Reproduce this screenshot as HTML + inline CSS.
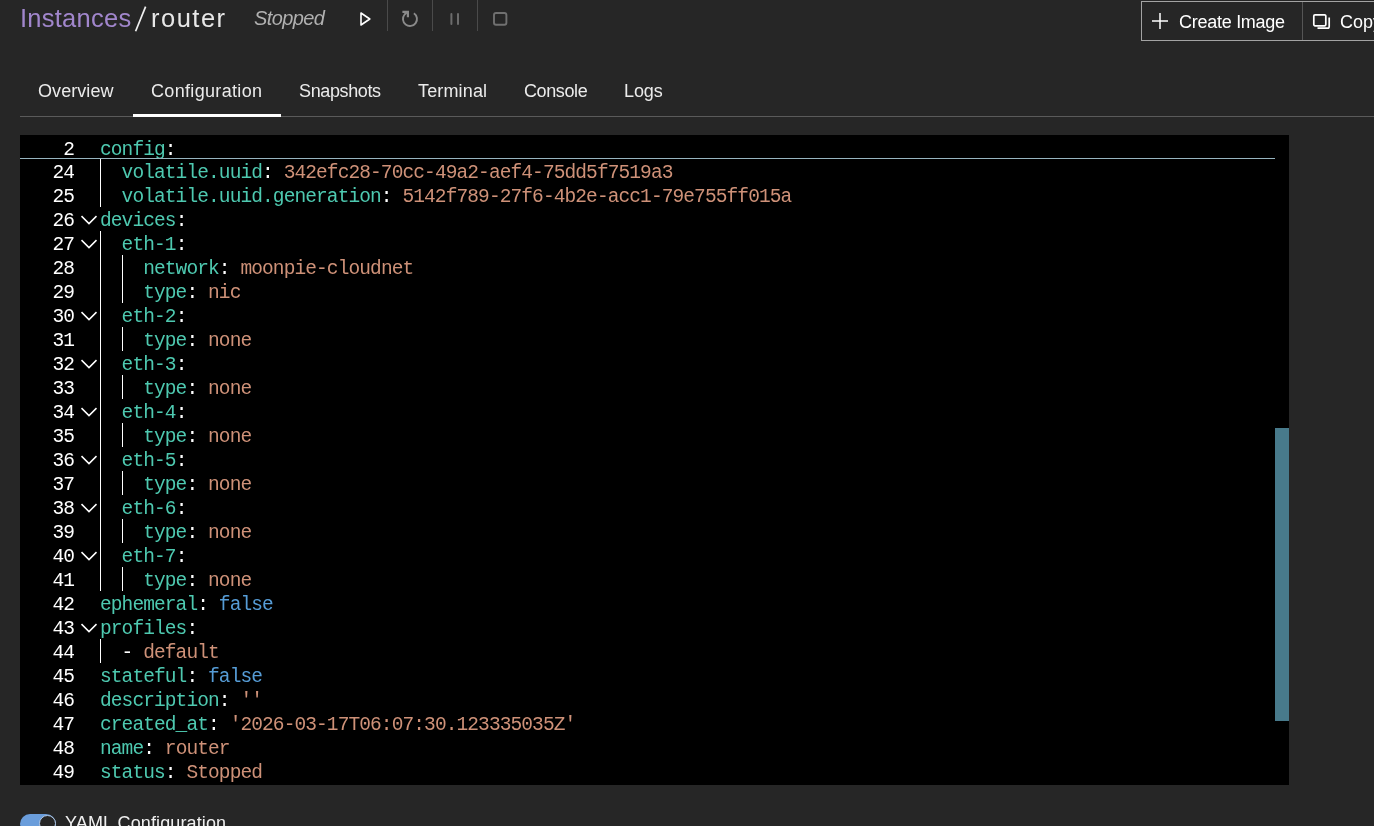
<!DOCTYPE html>
<html><head><meta charset="utf-8">
<style>
html,body{margin:0;padding:0}
#root{position:absolute;left:0;top:0;width:1374px;height:826px;will-change:transform}
body{width:1374px;height:826px;overflow:hidden;background:#262626;position:relative;font-family:"Liberation Sans",sans-serif;color:#fff}
.a{position:absolute;white-space:nowrap}
.t1{font-size:25.5px;line-height:30px}
.tab{font-size:18px;line-height:22px;color:#ebebeb}
#editor{position:absolute;left:20px;top:135px;width:1269px;height:650px;background:#000;overflow:hidden;font-family:"Liberation Mono",monospace;font-size:19.5px;letter-spacing:-0.9px}
.ln{position:absolute;left:0;width:54px;text-align:right;line-height:24px;height:24px;color:#fff;padding-top:1.5px}
.cd{position:absolute;left:80px;line-height:24px;height:24px;white-space:pre;color:#fff;padding-top:1.5px}
.fd{position:absolute;left:56px}
.gd{position:absolute;width:1px;background:#fff}
.k{color:#4ec9b0}.p{color:#fff}.s{color:#ce9178}.b{color:#569cd6}
</style></head><body>
<div id="root">
<!-- title -->
<div class="a t1" style="left:20px;top:3px;color:#a186cc;letter-spacing:0.25px">Instances</div>
<svg class="a" style="left:130px;top:0" width="20" height="40"><path d="M15.6 6.6 L5.6 31.2" stroke="#f0f0f0" stroke-width="1.7"/></svg>
<div class="a t1" style="left:151px;top:3px;color:#e8e8e8;letter-spacing:1.5px">router</div>
<div class="a" style="left:254px;top:5px;font-size:20px;line-height:26px;font-style:italic;color:#b0b0b0;letter-spacing:-0.6px">Stopped</div>
<!-- action buttons -->
<svg class="a" style="left:0;top:0" width="520" height="40">
 <path d="M361 13 L369.8 19 L361 25 Z" fill="none" stroke="#fff" stroke-width="1.6" stroke-linejoin="round"/>
 <rect x="387" y="0" width="1" height="31" fill="#4a4a4a"/>
 <rect x="432" y="0" width="1" height="31" fill="#4a4a4a"/>
 <rect x="477" y="0" width="1" height="31" fill="#4a4a4a"/>
 <path d="M413.9 13.2 A7 7 0 1 1 404.6 14.5 L407.4 12" fill="none" stroke="#8a8a8a" stroke-width="1.9"/>
 <path d="M402.4 11.9 L407.9 11.9 L407.9 17.2" fill="none" stroke="#8a8a8a" stroke-width="2.2" stroke-linejoin="miter"/>
 <path d="M451.4 14 V24 M458 14 V24" stroke="#6c6c6c" stroke-width="2" stroke-linecap="round"/>
 <rect x="494" y="13" width="12.4" height="11.8" rx="2" fill="none" stroke="#707070" stroke-width="1.9"/>
</svg>
<!-- create image / copy -->
<div class="a" style="left:1141px;top:1px;width:260px;height:38px;border:1px solid #a3a3a3"></div>
<div class="a" style="left:1302px;top:2px;width:1px;height:38px;background:#555"></div>
<svg class="a" style="left:1150px;top:11px" width="20" height="20"><path d="M10 2 V18 M2 10 H18" stroke="#fff" stroke-width="1.5"/></svg>
<svg class="a" style="left:1310px;top:10px" width="24" height="22"><path d="M5 4.8 H14.6 A1.2 1.2 0 0 1 15.8 6 V14.6 A1.2 1.2 0 0 1 14.6 15.8 H5 A1.2 1.2 0 0 1 3.8 14.6 V6 A1.2 1.2 0 0 1 5 4.8 Z" fill="none" stroke="#fff" stroke-width="1.7"/><path d="M19.2 7.5 V16.5 A1.7 1.7 0 0 1 17.5 18.2 H7.5" fill="none" stroke="#fff" stroke-width="1.7"/></svg>
<div class="a tab" style="left:1179px;top:11px;color:#fff;letter-spacing:-0.27px">Create Image</div>
<div class="a tab" style="left:1340px;top:11px;color:#fff">Copy</div>
<!-- tabs -->
<div class="a tab" style="left:38px;top:80px;letter-spacing:0.07px">Overview</div>
<div class="a tab" style="left:151px;top:80px;letter-spacing:0.33px">Configuration</div>
<div class="a tab" style="left:299px;top:80px;letter-spacing:-0.37px">Snapshots</div>
<div class="a tab" style="left:418px;top:80px;letter-spacing:0.15px">Terminal</div>
<div class="a tab" style="left:524px;top:80px;letter-spacing:-0.4px">Console</div>
<div class="a tab" style="left:624px;top:80px;letter-spacing:-0.13px">Logs</div>
<div class="a" style="left:20px;top:116px;width:1354px;height:1px;background:#5a5a5a"></div>
<div class="a" style="left:133px;top:114px;width:148px;height:3px;background:#fff"></div>
<!-- editor -->
<div id="editor">
<div class="ln" style="top:1px">2</div>
<div class="cd" style="top:1px"><span class="k">config</span><span class="p">:</span></div>
<div class="a" style="left:0;top:23px;width:1255px;height:1px;background:#97b4bf"></div>
<div class="gd" style="left:80px;top:24px;height:48px"></div>
<div class="gd" style="left:80px;top:96px;height:360px"></div>
<div class="gd" style="left:80px;top:504px;height:24px"></div>
<div class="gd" style="left:102px;top:120px;height:48px"></div>
<div class="gd" style="left:102px;top:192px;height:24px"></div>
<div class="gd" style="left:102px;top:240px;height:24px"></div>
<div class="gd" style="left:102px;top:288px;height:24px"></div>
<div class="gd" style="left:102px;top:336px;height:24px"></div>
<div class="gd" style="left:102px;top:384px;height:24px"></div>
<div class="gd" style="left:102px;top:432px;height:24px"></div>
<div class="ln" style="top:24px">24</div>
<div class="cd" style="top:24px">  <span class="k">volatile.uuid</span><span class="p">: </span><span class="s">342efc28-70cc-49a2-aef4-75dd5f7519a3</span></div>
<div class="ln" style="top:48px">25</div>
<div class="cd" style="top:48px">  <span class="k">volatile.uuid.generation</span><span class="p">: </span><span class="s">5142f789-27f6-4b2e-acc1-79e755ff015a</span></div>
<div class="ln" style="top:72px">26</div>
<svg class="fd" style="top:72px" width="28" height="24"><path d="M5.5 9.1 L13 16.6 L20.5 9.1" fill="none" stroke="#fff" stroke-width="1.5"/></svg>
<div class="cd" style="top:72px"><span class="k">devices</span><span class="p">:</span></div>
<div class="ln" style="top:96px">27</div>
<svg class="fd" style="top:96px" width="28" height="24"><path d="M5.5 9.1 L13 16.6 L20.5 9.1" fill="none" stroke="#fff" stroke-width="1.5"/></svg>
<div class="cd" style="top:96px">  <span class="k">eth-1</span><span class="p">:</span></div>
<div class="ln" style="top:120px">28</div>
<div class="cd" style="top:120px">    <span class="k">network</span><span class="p">: </span><span class="s">moonpie-cloudnet</span></div>
<div class="ln" style="top:144px">29</div>
<div class="cd" style="top:144px">    <span class="k">type</span><span class="p">: </span><span class="s">nic</span></div>
<div class="ln" style="top:168px">30</div>
<svg class="fd" style="top:168px" width="28" height="24"><path d="M5.5 9.1 L13 16.6 L20.5 9.1" fill="none" stroke="#fff" stroke-width="1.5"/></svg>
<div class="cd" style="top:168px">  <span class="k">eth-2</span><span class="p">:</span></div>
<div class="ln" style="top:192px">31</div>
<div class="cd" style="top:192px">    <span class="k">type</span><span class="p">: </span><span class="s">none</span></div>
<div class="ln" style="top:216px">32</div>
<svg class="fd" style="top:216px" width="28" height="24"><path d="M5.5 9.1 L13 16.6 L20.5 9.1" fill="none" stroke="#fff" stroke-width="1.5"/></svg>
<div class="cd" style="top:216px">  <span class="k">eth-3</span><span class="p">:</span></div>
<div class="ln" style="top:240px">33</div>
<div class="cd" style="top:240px">    <span class="k">type</span><span class="p">: </span><span class="s">none</span></div>
<div class="ln" style="top:264px">34</div>
<svg class="fd" style="top:264px" width="28" height="24"><path d="M5.5 9.1 L13 16.6 L20.5 9.1" fill="none" stroke="#fff" stroke-width="1.5"/></svg>
<div class="cd" style="top:264px">  <span class="k">eth-4</span><span class="p">:</span></div>
<div class="ln" style="top:288px">35</div>
<div class="cd" style="top:288px">    <span class="k">type</span><span class="p">: </span><span class="s">none</span></div>
<div class="ln" style="top:312px">36</div>
<svg class="fd" style="top:312px" width="28" height="24"><path d="M5.5 9.1 L13 16.6 L20.5 9.1" fill="none" stroke="#fff" stroke-width="1.5"/></svg>
<div class="cd" style="top:312px">  <span class="k">eth-5</span><span class="p">:</span></div>
<div class="ln" style="top:336px">37</div>
<div class="cd" style="top:336px">    <span class="k">type</span><span class="p">: </span><span class="s">none</span></div>
<div class="ln" style="top:360px">38</div>
<svg class="fd" style="top:360px" width="28" height="24"><path d="M5.5 9.1 L13 16.6 L20.5 9.1" fill="none" stroke="#fff" stroke-width="1.5"/></svg>
<div class="cd" style="top:360px">  <span class="k">eth-6</span><span class="p">:</span></div>
<div class="ln" style="top:384px">39</div>
<div class="cd" style="top:384px">    <span class="k">type</span><span class="p">: </span><span class="s">none</span></div>
<div class="ln" style="top:408px">40</div>
<svg class="fd" style="top:408px" width="28" height="24"><path d="M5.5 9.1 L13 16.6 L20.5 9.1" fill="none" stroke="#fff" stroke-width="1.5"/></svg>
<div class="cd" style="top:408px">  <span class="k">eth-7</span><span class="p">:</span></div>
<div class="ln" style="top:432px">41</div>
<div class="cd" style="top:432px">    <span class="k">type</span><span class="p">: </span><span class="s">none</span></div>
<div class="ln" style="top:456px">42</div>
<div class="cd" style="top:456px"><span class="k">ephemeral</span><span class="p">: </span><span class="b">false</span></div>
<div class="ln" style="top:480px">43</div>
<svg class="fd" style="top:480px" width="28" height="24"><path d="M5.5 9.1 L13 16.6 L20.5 9.1" fill="none" stroke="#fff" stroke-width="1.5"/></svg>
<div class="cd" style="top:480px"><span class="k">profiles</span><span class="p">:</span></div>
<div class="ln" style="top:504px">44</div>
<div class="cd" style="top:504px"><span class="p">  - </span><span class="s">default</span></div>
<div class="ln" style="top:528px">45</div>
<div class="cd" style="top:528px"><span class="k">stateful</span><span class="p">: </span><span class="b">false</span></div>
<div class="ln" style="top:552px">46</div>
<div class="cd" style="top:552px"><span class="k">description</span><span class="p">: </span><span class="s">&#x27;&#x27;</span></div>
<div class="ln" style="top:576px">47</div>
<div class="cd" style="top:576px"><span class="k">created_at</span><span class="p">: </span><span class="s">&#x27;2026-03-17T06:07:30.123335035Z&#x27;</span></div>
<div class="ln" style="top:600px">48</div>
<div class="cd" style="top:600px"><span class="k">name</span><span class="p">: </span><span class="s">router</span></div>
<div class="ln" style="top:624px">49</div>
<div class="cd" style="top:624px"><span class="k">status</span><span class="p">: </span><span class="s">Stopped</span></div><div class="a" style="left:1255px;top:293px;width:14px;height:293px;background:#487a8b"></div>
</div>
<!-- toggle -->
<div class="a" style="left:20px;top:814px;width:36px;height:20px;border-radius:10px;background:#6a9ddb"></div>
<div class="a" style="left:39px;top:815px;width:15px;height:15px;border-radius:50%;background:#262626;border:1px solid #b4cbe8"></div>
<div class="a tab" style="left:65px;top:812px;color:#f0f0f0;letter-spacing:0.12px">YAML Configuration</div>
</div>
</body></html>
